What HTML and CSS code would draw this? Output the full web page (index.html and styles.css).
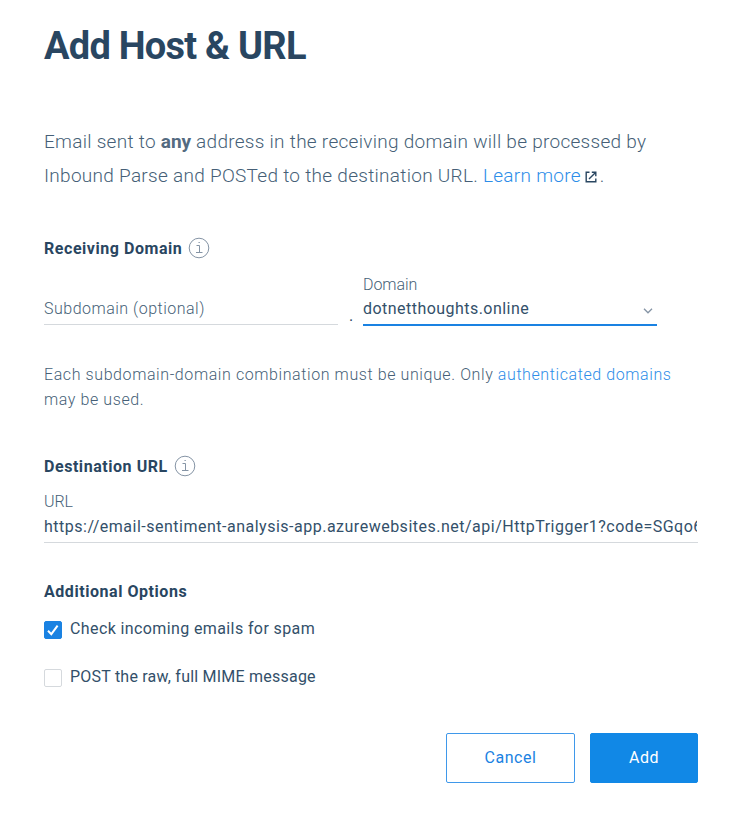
FILE: index.html
```
<!DOCTYPE html>
<html lang="en">
<head>
<meta charset="utf-8">
<title>Add Host &amp; URL</title>
<link rel="stylesheet" href="styles.css">
</head>
<body>
<main class="page">
  <h1 class="title">Add Host &amp; URL</h1>
  <p class="intro">Email sent to <strong>any</strong> address in the receiving domain will be processed by<br>Inbound Parse and POSTed to the destination URL. <a class="link" href="#">Learn more</a><svg class="ext" width="12" height="12" viewBox="0 0 12 12"><path d="M4.5 1.2H1.2v9.6h9.6V7.5M6.8 1.2h4V5.2M10.8 1.2 4 8"/></svg>.</p>

  <h2 class="heading">Receiving Domain<svg class="info" width="22" height="22" viewBox="0 0 22 22"><circle cx="11" cy="11" r="9.8"/><path d="M8.5 8.5H11.5V15.5M8 15.5H14.5M10.5 5.5H11.8"/></svg></h2>
  <div class="domain-row">
    <div class="field subdomain">Subdomain (optional)</div>
    <div class="dot">.</div>
    <div class="field domain"><div class="label">Domain</div><div class="value">dotnetthoughts.online<svg class="chevron" width="10" height="6" viewBox="0 0 10 6"><path d="M1 .8 5 4.8 9 .8"/></svg></div></div>
  </div>
  <p class="note">Each subdomain-domain combination must be unique. Only <a class="link" href="#">authenticated domains</a><br>may be used.</p>

  <h2 class="heading destination">Destination URL<svg class="info" width="22" height="22" viewBox="0 0 22 22"><circle cx="11" cy="11" r="9.8"/><path d="M8.5 8.5H11.5V15.5M8 15.5H14.5M10.5 5.5H11.8"/></svg></h2>
  <div class="field url"><div class="label">URL</div><div class="value">https://email-sentiment-analysis-app.azurewebsites.net/api/HttpTrigger1?code=SGqo6</div></div>

  <h2 class="heading options">Additional Options</h2>
  <div class="check"><span class="box checked"><svg width="18" height="18" viewBox="0 0 18 18"><path d="m4 9.8 3.3 3.4 6.3-8.5"/></svg></span>Check incoming emails for spam</div>
  <div class="check raw"><span class="box"></span>POST the raw, full MIME message</div>
  <div class="actions"><button class="btn cancel">Cancel</button><button class="btn add">Add</button></div>
</main>
</body>
</html>
```
FILE: styles.css
```
* { box-sizing: border-box; }
body { margin: 0; background: #fff; color: #294661; font: 400 16px/24px Roboto, "Liberation Sans", sans-serif; letter-spacing: .46px; }
.page { padding: 20px 56px 0 44px; }
.title { margin: 0; font-size: 38px; line-height: 52px; font-weight: 700; letter-spacing: -.75px; }
.intro { margin: 53px 0 0; font-size: 19px; font-weight: 300; line-height: 34px; letter-spacing: .28px; color: #465f77; white-space: nowrap; }
.intro strong { color: #546b81; font-weight: 700; letter-spacing: 0; }
.link { color: #2d8de8; text-decoration: none; }
.ext { margin: 0 3px 0 4px; vertical-align: -1px; fill: none; stroke: #294661; stroke-width: 1.4; }
.heading { display: flex; align-items: center; margin: 44px 0 0; height: 24px; font-size: 16px; font-weight: 700; letter-spacing: .55px; }
.info { margin: -2px 0 0 6px; fill: none; stroke: #8594a5; stroke-width: 1; }
.domain-row { display: flex; height: 65px; }
.field { border-bottom: 1px solid #d5d9dd; }
.subdomain { width: 294px; margin-bottom: 1px; padding-top: 36px; color: #465f77; font-weight: 300; letter-spacing: .5px; }
.dot { width: 25px; padding: 43px 0 0 11px; }
.domain { width: 294px; padding-top: 12px; border-bottom: 2px solid #1a82e2; }
.label { color: #465f77; font-weight: 300; letter-spacing: -.05px; }
.value { display: flex; justify-content: space-between; align-items: center; overflow: hidden; white-space: nowrap; color: #33506a; }
.chevron { margin: 4px 4px 0 0; fill: none; stroke: #8594a5; stroke-width: 1.3; }
.note { margin: 36px 0 0; font-weight: 300; line-height: 25px; color: #465f77; white-space: nowrap; letter-spacing: .59px; }
.destination { margin-top: 43px; }
.url { height: 64px; padding: 11px 1px 0 0; }
.url .label { margin-bottom: 1px; }
.url .value { letter-spacing: .5px; }
.options { margin: 37px 0 13px; }
.check { display: flex; gap: 8px; height: 24px; margin-bottom: 24px; letter-spacing: .39px; color: #33506a; }
.raw { letter-spacing: .22px; }
.box { width: 18px; height: 18px; margin-top: 4px; border: 1px solid #d5d9dd; border-radius: 2px; }
.box svg { display: block; margin: -1px; fill: none; stroke: #fff; stroke-width: 2; }
.checked { background: #1a82e2; border-color: #1a82e2; }
.actions { display: flex; justify-content: flex-end; gap: 15px; margin-top: 44px; }
.btn { height: 50px; border: 1px solid #3f98ea; border-radius: 2px; background: #fff; color: #1a82e2; font: inherit; letter-spacing: .55px; }
.cancel { width: 129px; }
.add { width: 108px; border-color: #1188e6; background: #1188e6; color: #fff; }
```
